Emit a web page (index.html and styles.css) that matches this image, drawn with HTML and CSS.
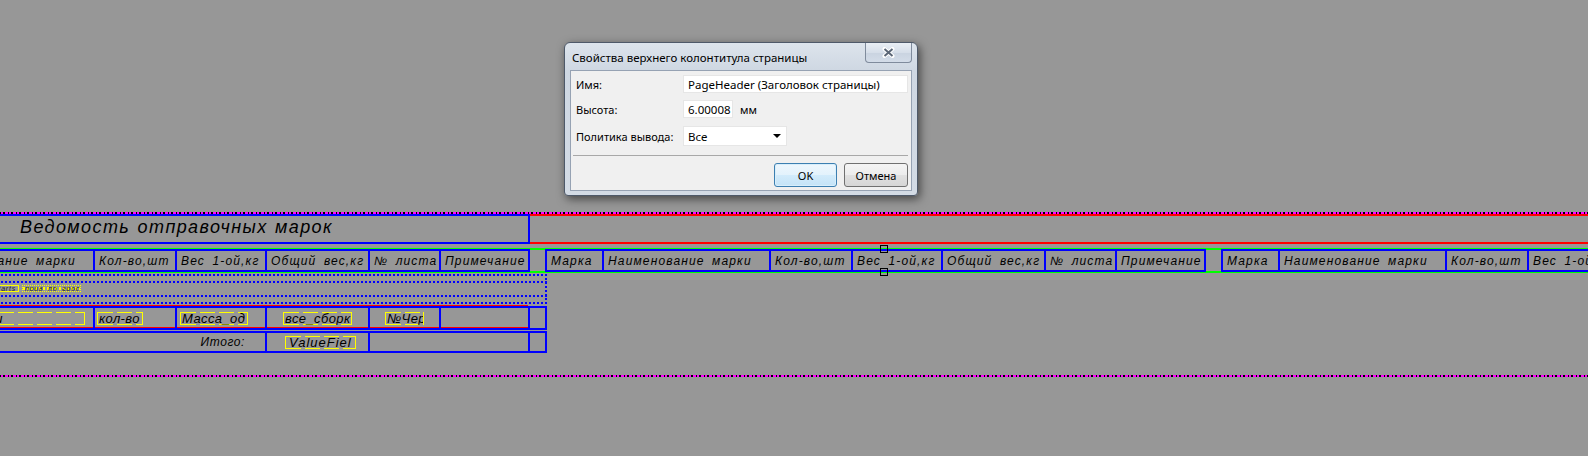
FILE: index.html
```html
<!DOCTYPE html>
<html lang="ru">

<head>
    <meta charset="utf8">
    <title>Дизайнер отчёта</title>
    <link rel="stylesheet" href="styles.css">
</head>

<body>
    <div class="designer">
        <div class="page-edge"></div>

        <div class="title-band">
            <div class="title-box">Ведомость отправочных марок</div>
            <div class="rail"></div>
        </div>

        <div class="header-band">
            <div class="sheet-head">
                <div class="cell c1">Марка</div>
                <div class="cell c2">Наименование марки</div>
                <div class="cell c3">Кол-во,шт</div>
                <div class="cell c4">Вес 1-ой,кг</div>
                <div class="cell c5">Общий вес,кг</div>
                <div class="cell c6">№ листа</div>
                <div class="cell c7">Примечание</div>
            </div>
            <div class="gutter"></div>
            <div class="sheet-head">
                <div class="cell c1">Марка</div>
                <div class="cell c2">Наименование марки</div>
                <div class="cell c3">Кол-во,шт</div>
                <div class="cell c4">Вес 1-ой,кг</div>
                <div class="cell c5">Общий вес,кг</div>
                <div class="cell c6">№ листа</div>
                <div class="cell c7">Примечание</div>
            </div>
            <div class="gutter"></div>
            <div class="sheet-head">
                <div class="cell c1">Марка</div>
                <div class="cell c2">Наименование марки</div>
                <div class="cell c3">Кол-во,шт</div>
                <div class="cell c4">Вес 1-ой,кг</div>
                <div class="cell c5">Общий вес,кг</div>
                <div class="cell c6">№ листа</div>
                <div class="cell c7">Примечание</div>
            </div>
        </div>

        <div class="group-band">
            <span class="tiny t-parts">Parts</span>
            <span class="tiny t-group">прив_по_гросс</span>
        </div>

        <div class="band-rule"></div>
        <div class="row data-row">
            <div class="cell c1"></div>
            <div class="cell c2"><span class="field f-name">Марки</span></div>
            <div class="cell c3"><span class="field f-count">кол-во</span></div>
            <div class="cell c4"><span class="field f-mass">Масса_од</span></div>
            <div class="cell c5"><span class="field f-sum">все_сборк</span></div>
            <div class="cell c6"><span class="field f-sheet">№Чер</span></div>
            <div class="cell c7"></div>
            <div class="cell c-gap"></div>
        </div>

        <div class="row total-row">
            <div class="cell c-label">Итого:</div>
            <div class="cell c5"><span class="field f-value">ValueFiel</span></div>
            <div class="cell c-rest"></div>
            <div class="cell c-gap"></div>
        </div>

        <div class="page-edge bottom"></div>
    </div>

    <div class="handle top"></div>
    <div class="handle bottom"></div>

    <div class="dialog">
        <div class="titlebar">
            <span class="caption">Свойства верхнего колонтитула страницы</span>
            <button class="close">
                <svg width="13" height="11" viewBox="0 0 13 11">
                    <path d="M2.5 2 L10.5 9 M10.5 2 L2.5 9" stroke="#fff" stroke-width="4" stroke-linecap="round"/>
                    <path d="M2.5 2 L10.5 9 M10.5 2 L2.5 9" stroke="#5b6676" stroke-width="2"/>
                </svg>
            </button>
        </div>
        <div class="client">
            <div class="form">
                <label>Имя:</label>
                <div class="input wide">PageHeader (Заголовок страницы)</div>
                <label>Высота:</label>
                <div class="unit-line">
                    <div class="input short">6.00008</div>
                    <span class="unit">мм</span>
                </div>
                <label class="l-select">Политика вывода:</label>
                <div class="select">Все<span class="arrow"></span></div>
            </div>
            <div class="separator"></div>
            <div class="buttons">
                <button class="btn default">OK</button>
                <button class="btn">Отмена</button>
            </div>
        </div>
    </div>
</body>

</html>
```

FILE: styles.css
```css
* {
    box-sizing: border-box;
}

body {
    margin: 0;
    height: 456px;
    overflow: hidden;
    position: relative;
    background-color: #979797;
    font-family: "Liberation Sans", Arial, sans-serif;
}

/* поверхность дизайнера */

.designer {
    width: 1740px;
    margin-left: -131px;
    padding-top: 212px;
    font-size: 12px;
    font-style: italic;
    letter-spacing: 1.3px;
    color: #000;
}

.page-edge {
    height: 2px;
    background: repeating-linear-gradient(90deg, #ff00ff 0 3px, #000 3px 4px, #ff00ff 4px 6px, #000 6px 8px);
}

.page-edge.bottom {
    margin-top: 22px;
}

.title-band {
    display: flex;
    height: 30px;
}

.title-box {
    width: 661px;
    flex-shrink: 0;
    border: 2px solid #0000ff;
    padding-left: 149px;
    font-size: 18px;
    line-height: 22px;
    letter-spacing: 1.4px;
    word-spacing: 1px;
    white-space: nowrap;
}

.rail {
    flex-grow: 1;
    border-top: 2px solid #ff0000;
    border-bottom: 2px solid #ff0000;
}

.header-band {
    display: flex;
    height: 25px;
    margin-top: 4px;
    border-top: 2px solid #00ff00;
    border-bottom: 2px solid #00ff00;
}

.sheet-head {
    display: flex;
    flex-shrink: 0;
    width: 661px;
    height: 23px;
    margin: -1px 0;
    border: 2px solid #0000ff;
    border-right: 0;
}

.gutter {
    width: 15px;
    flex-shrink: 0;
}

.cell {
    flex-shrink: 0;
    border-right: 2px solid #0000ff;
    white-space: nowrap;
    overflow: hidden;
}

.sheet-head .cell {
    padding: 1px 0 0 4px;
    line-height: 19px;
    letter-spacing: 1.15px;
    word-spacing: 3px;
}

.c1 { width: 57px; }
.c2 { width: 167px; }
.c3 { width: 82px; }
.c4 { width: 90px; }
.c5 { width: 103px; }
.c6 { width: 71px; }
.c7 { width: 89px; }
.c-gap { width: 17px; }
.c-label { width: 396px; }
.c-rest { width: 160px; }

/* группа (пунктир) */

.group-band {
    display: flex;
    gap: 3px;
    width: 678px;
    height: 30px;
    margin-top: 1px;
    padding: 11px 0 0 91px;
    background:
        linear-gradient(90deg, #0000ff 50%, transparent 50%) 0 0 / 4px 2px repeat-x,
        linear-gradient(90deg, #0000ff 50%, transparent 50%) 0 7px / 4px 2px repeat-x,
        linear-gradient(90deg, #0000ff 50%, transparent 50%) 0 21px / 4px 2px repeat-x,
        linear-gradient(90deg, #0000ff 50%, transparent 50%) 0 28px / 4px 2px repeat-x,
        linear-gradient(#0000ff 50%, transparent 50%) 100% 0 / 2px 4px repeat-y;
}

.tiny {
    height: 7px;
    width: 59px;
    font-size: 7px;
    line-height: 6px;
    letter-spacing: 0.8px;
    white-space: nowrap;
    overflow: hidden;
    color: #222;
}

.t-parts {
    border: 1px solid #ffff00;
    text-align: right;
    padding-right: 2px;
}

.t-group {
    padding-left: 2px;
    border: 1px dotted #ffff00;
    background: repeating-linear-gradient(90deg, #ffff00 0 2px, transparent 2px 4px) 0 50% / 100% 3px no-repeat;
}

/* строки данных */

.band-rule {
    width: 659px;
    height: 1px;
    margin-top: 1px;
    background-color: #ff0000;
}

.row {
    display: flex;
    width: 678px;
    border: 2px solid #0000ff;
    border-right: 0;
}

.row .cell {
    display: flex;
    align-items: center;
}

.data-row {
    height: 24px;
}

.data-row .cell:not(.c-gap) {
    box-shadow: inset 0 -1px #ff0000;
}

.total-row {
    height: 22px;
    margin-top: 1px;
}

.c-label {
    justify-content: flex-end;
    padding-right: 20px;
    letter-spacing: 0.6px;
}

.field {
    display: block;
    height: 13px;
    padding: 0 1px;
    font-size: 13px;
    line-height: 13px;
    letter-spacing: 0.4px;
    white-space: nowrap;
    overflow: hidden;
    border-left: 1px solid #ffff00;
    border-right: 1px solid #ffff00;
    background:
        repeating-linear-gradient(90deg, #ffff00 0 15px, transparent 15px 19px) 0 0 / 100% 1px no-repeat,
        repeating-linear-gradient(90deg, #ffff00 0 15px, transparent 15px 19px) 0 100% / 100% 1px no-repeat;
}

.f-name { width: 125px; margin-left: 32px; }
.f-count { width: 46px; margin-left: 2px; }
.f-mass { width: 68px; margin-left: 3px; }
.f-sum { width: 69px; margin-left: 16px; }
.f-sheet { width: 39px; margin-left: 15px; }
.f-value { width: 71px; margin-left: 18px; padding-left: 3px; letter-spacing: 1px; }

.handle {
    position: absolute;
    left: 880px;
    width: 8px;
    height: 8px;
    border: 1px solid #000;
}

.handle.top { top: 245px; }
.handle.bottom { top: 268px; }

/* диалог */

.dialog {
    position: absolute;
    left: 564px;
    top: 42px;
    width: 354px;
    height: 154px;
    display: flex;
    flex-direction: column;
    padding: 0 5px 4px;
    border: 1px solid #4e5969;
    border-radius: 6px 6px 4px 4px;
    background: linear-gradient(#dde4ec, #ced7e2 28px, #d3dbe5);
    box-shadow: 2px 3px 10px rgb(0 0 0 / 55%);
    font-family: "Noto Sans", "Segoe UI", sans-serif;
    font-size: 11px;
    color: #000;
}

.titlebar {
    display: flex;
    height: 27px;
}

.caption {
    align-self: center;
    padding: 1px 0 0 2px;
    font-size: 11.5px;
}

.close {
    margin-left: auto;
    width: 47px;
    height: 20px;
    padding: 0;
    display: flex;
    align-items: center;
    justify-content: center;
    border: 1px solid #7f8b9c;
    border-top: 0;
    border-radius: 0 0 4px 4px;
    background: linear-gradient(#e9eef4, #d6dee9 50%, #c9d3e0 51%, #d3dce8);
}

.client {
    flex-grow: 1;
    border: 1px solid #96a2b3;
    background-color: #f0f0f0;
}

.form {
    display: grid;
    grid-template-columns: 107px 225px;
    row-gap: 7px;
    align-items: center;
    padding: 4px 0 0 5px;
}

.input {
    height: 18px;
    padding: 0 4px;
    line-height: 17px;
    background-color: #fff;
    border: 1px solid #e6e6e6;
    font-size: 11.5px;
    white-space: nowrap;
}

.input.short {
    width: 50px;
}

.unit-line {
    display: flex;
    align-items: center;
    gap: 7px;
}

.l-select {
    margin-top: 1px;
}

.select {
    display: flex;
    align-items: center;
    justify-content: space-between;
    width: 104px;
    height: 20px;
    margin-top: 1px;
    padding: 0 5px 0 4px;
    background-color: #fff;
    border: 1px solid #e6e6e6;
    font-size: 11.5px;
}

.arrow {
    border-left: 4px solid transparent;
    border-right: 4px solid transparent;
    border-top: 4px solid #000;
}

.separator {
    margin: 9px 3px 0 2px;
    border-top: 1px solid #a8a8a8;
}

.buttons {
    display: flex;
    justify-content: flex-end;
    gap: 7px;
    padding: 7px 3px 0 0;
}

.btn {
    width: 63px;
    height: 24px;
    padding: 0;
    border: 1px solid #707070;
    border-radius: 3px;
    background: linear-gradient(#f4f4f4, #ececec 50%, #e0e0e0 51%, #d6d6d6);
    font-family: "Noto Sans", "Segoe UI", sans-serif;
    font-size: 11px;
    color: #000;
}

.btn + .btn {
    width: 64px;
}

.btn.default {
    border-color: #3c7fb1;
    background: linear-gradient(#eef7fd, #e3f2fc 50%, #d2ebfb 51%, #c4e3f7);
    box-shadow: inset 0 0 0 1px #d8eefb;
}
```
